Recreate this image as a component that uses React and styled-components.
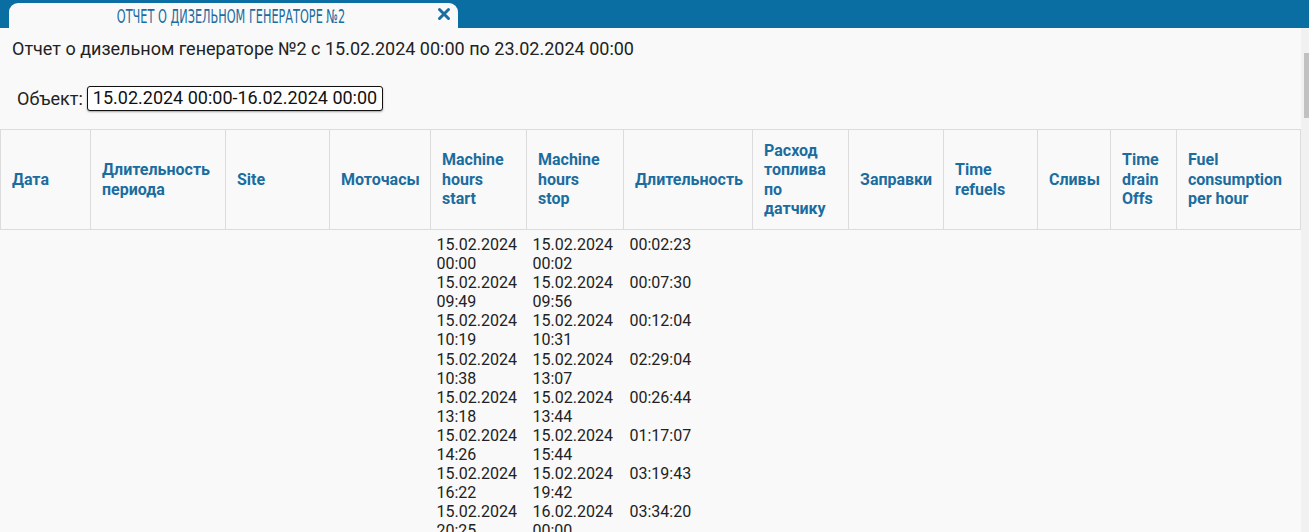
import styled, { createGlobalStyle } from 'styled-components';

const GlobalStyle = createGlobalStyle`
  html, body {
    margin: 0;
    padding: 0;
    background: #f9f9f9;
    font-family: Roboto, 'Liberation Sans', sans-serif;
    overflow: hidden;
  }
`;

const columns = [
  { title: 'Дата', width: 90 },
  { title: 'Длительность периода', width: 135 },
  { title: 'Site', width: 104 },
  { title: 'Моточасы', width: 101 },
  { title: 'Machine hours start', width: 96 },
  { title: 'Machine hours stop', width: 97 },
  { title: 'Длительность', width: 129 },
  { title: 'Расход топлива по датчику', width: 96 },
  { title: 'Заправки', width: 95 },
  { title: 'Time refuels', width: 94 },
  { title: 'Сливы', width: 73 },
  { title: 'Time drain Offs', width: 66 },
  { title: 'Fuel consumption per hour', width: 124 },
];

const runs = [
  ['15.02.2024 00:00', '15.02.2024 00:02', '00:02:23'],
  ['15.02.2024 09:49', '15.02.2024 09:56', '00:07:30'],
  ['15.02.2024 10:19', '15.02.2024 10:31', '00:12:04'],
  ['15.02.2024 10:38', '15.02.2024 13:07', '02:29:04'],
  ['15.02.2024 13:18', '15.02.2024 13:44', '00:26:44'],
  ['15.02.2024 14:26', '15.02.2024 15:44', '01:17:07'],
  ['15.02.2024 16:22', '15.02.2024 19:42', '03:19:43'],
  ['15.02.2024 20:25', '16.02.2024 00:00', '03:34:20'],
];

const Page = styled.div`
  height: 532px;
  display: flex;
  flex-direction: column;
`;

const TopBar = styled.div`
  height: 28px;
  background: #0a6ea3;
  display: flex;
  align-items: flex-end;
  padding-left: 9px;
  flex-shrink: 0;
`;

const Tab = styled.div`
  width: 449px;
  height: 25px;
  background: #f9f9f9;
  border-radius: 9px 9px 0 0;
  display: flex;
  align-items: center;
  justify-content: center;
  position: relative;
`;

const TabTitle = styled.span`
  display: inline-block;
  margin-left: -5px;
  font-family: 'DejaVu Sans Condensed', 'DejaVu Sans', sans-serif;
  font-stretch: condensed;
  font-size: 19px;
  line-height: 22px;
  color: #1b6d9f;
  transform: scaleX(0.66);
  white-space: nowrap;
`;

const Close = styled.span`
  position: absolute;
  right: 6px;
  top: 1px;
  width: 16px;
  height: 20px;
  display: flex;
  align-items: center;
  justify-content: center;
`;

const Body = styled.div`
  flex: 1;
  display: flex;
  overflow: hidden;
`;

const Content = styled.div`
  flex: 1;
  min-width: 0;
`;

const Scrollbar = styled.div`
  width: 8px;
  background: #f1f1f1;
  padding-top: 25px;
  flex-shrink: 0;
`;

const Thumb = styled.div`
  width: 5px;
  margin-left: 3px;
  height: 65px;
  background: #c1c1c1;
`;

const Heading = styled.div`
  font-size: 18px;
  color: #222;
  padding: 11px 12px 0;
  line-height: 20px;
`;

const ObjectRow = styled.div`
  display: flex;
  align-items: center;
  gap: 4px;
  margin: 27px 0 0 17px;
  font-size: 18px;
  color: #222;
`;

const ObjectBox = styled.div`
  border: 1px solid #111;
  border-radius: 3px;
  box-shadow: 0 1px 2px rgba(0, 0, 0, 0.35);
  background: #fff;
  padding: 1px 5px 2px;
  font-size: 18px;
  line-height: 20px;
  color: #111;
`;

const Table = styled.table`
  margin-top: 18px;
  border-collapse: collapse;
  table-layout: fixed;
  width: 1301px;
`;

const Th = styled.th`
  border: 1px solid #dcdcdc;
  height: 99px;
  padding: 0 12px 0 11px;
  text-align: left;
  vertical-align: middle;
  font-size: 16px;
  line-height: 19.5px;
  font-weight: 700;
  color: #1b6d9f;
`;

const Td = styled.td`
  padding: 0 6px;
  vertical-align: top;
  font-size: 16px;
  line-height: 19.1px;
  color: #222;
`;

const FirstRow = styled.tr`
  td {
    padding-top: 5px;
  }
`;

const CloseIcon = () => (
  <svg width="14" height="14" viewBox="0 0 14 14">
    <path d="M2.5 2.5 L11.5 11.5 M11.5 2.5 L2.5 11.5" stroke="#1b6d9f" strokeWidth="3" strokeLinecap="round" />
  </svg>
);

const App = () => (
  <>
    <GlobalStyle />
    <Page>
      <TopBar>
        <Tab>
          <TabTitle>ОТЧЕТ О ДИЗЕЛЬНОМ ГЕНЕРАТОРЕ №2</TabTitle>
          <Close>
            <CloseIcon />
          </Close>
        </Tab>
      </TopBar>
      <Body>
        <Content>
          <Heading>Отчет о дизельном генераторе №2 с 15.02.2024 00:00 по 23.02.2024 00:00</Heading>
          <ObjectRow>
            Объект:
            <ObjectBox>15.02.2024 00:00-16.02.2024 00:00</ObjectBox>
          </ObjectRow>
          <Table>
            <colgroup>
              {columns.map((c) => (
                <col key={c.title} style={{ width: c.width }} />
              ))}
            </colgroup>
            <thead>
              <tr>
                {columns.map((c) => (
                  <Th key={c.title}>{c.title}</Th>
                ))}
              </tr>
            </thead>
            <tbody>
              {runs.map((r, i) => {
                const Row = i === 0 ? FirstRow : 'tr';
                return (
                  <Row key={i}>
                    <Td />
                    <Td />
                    <Td />
                    <Td />
                    <Td>{r[0]}</Td>
                    <Td>{r[1]}</Td>
                    <Td>{r[2]}</Td>
                    <Td />
                    <Td />
                    <Td />
                    <Td />
                    <Td />
                    <Td />
                  </Row>
                );
              })}
            </tbody>
          </Table>
        </Content>
        <Scrollbar>
          <Thumb />
        </Scrollbar>
      </Body>
    </Page>
  </>
);

export default App;
